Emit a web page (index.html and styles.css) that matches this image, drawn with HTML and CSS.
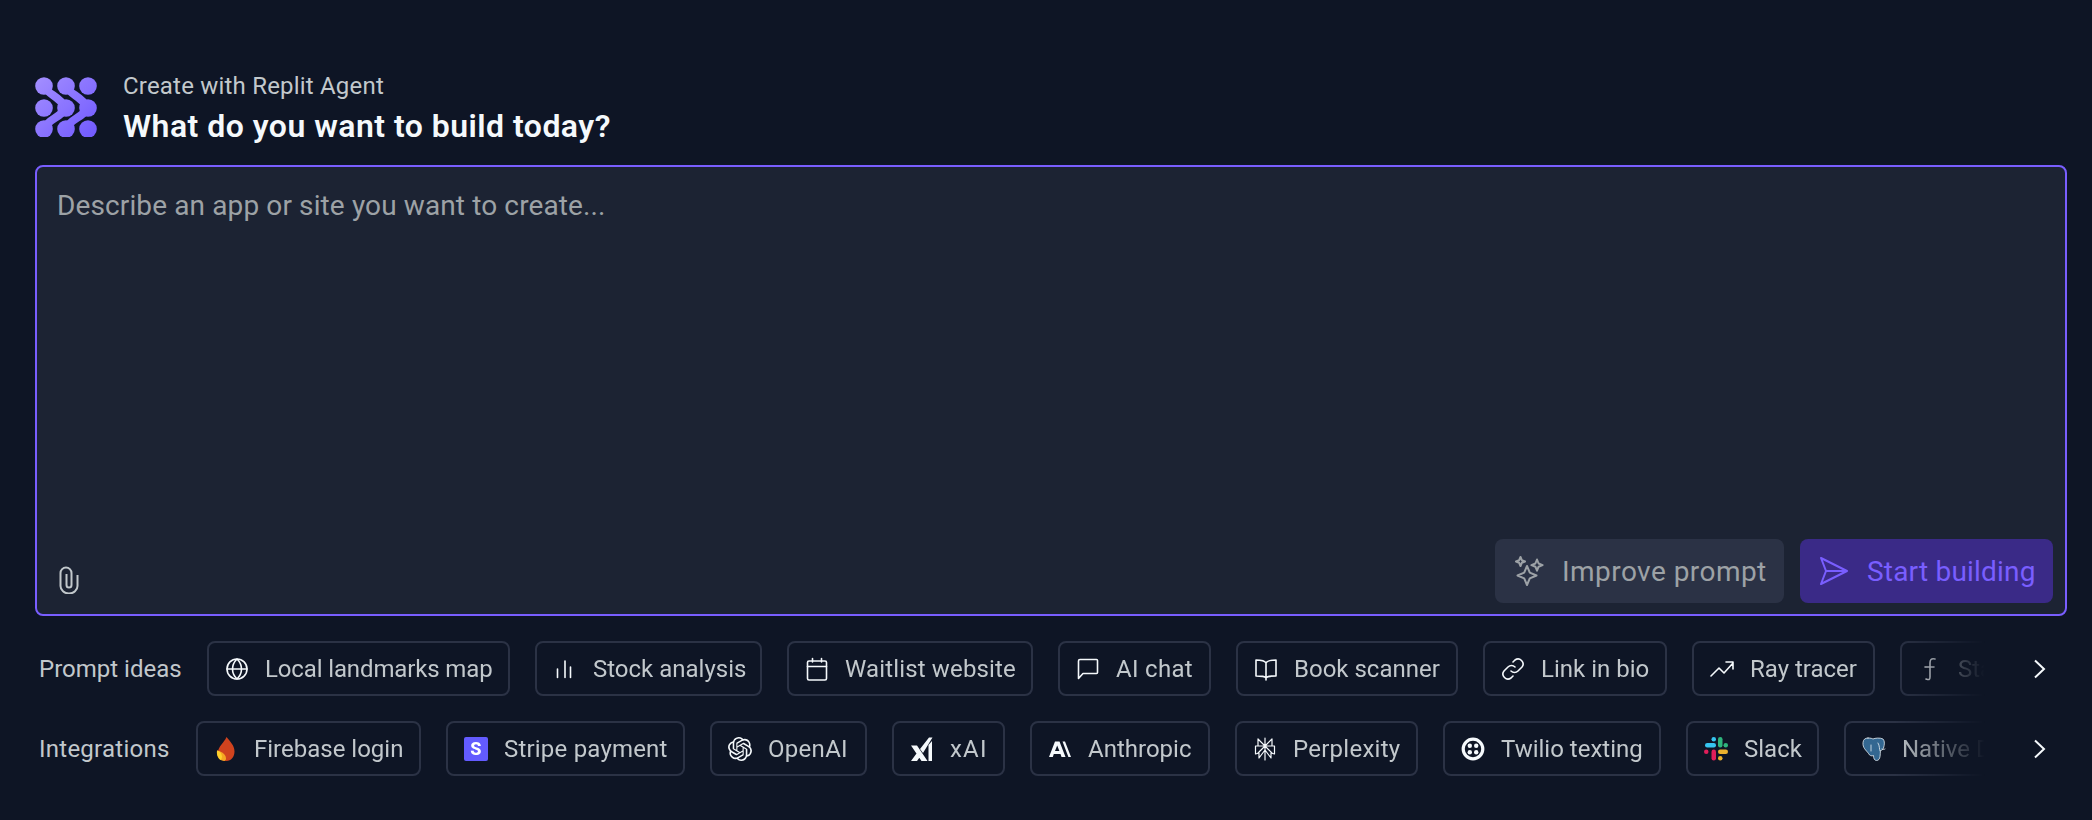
FILE: index.html
```html
<!DOCTYPE html>
<html lang="en">
<head>
<meta charset="utf-8">
<title>Create with Replit Agent</title>
<link rel="stylesheet" href="styles.css">
</head>
<body>
<main class="page">
  <header class="head">
    <svg class="logo" viewBox="0 0 62 60" aria-hidden="true">
      <defs><linearGradient id="lg" gradientUnits="userSpaceOnUse" x1="0" y1="0" x2="62" y2="60"><stop offset="0" stop-color="#a48fff"/><stop offset="1" stop-color="#7059ff"/></linearGradient></defs>
      <g fill="url(#lg)">
        <circle cx="9" cy="9" r="8.800"/><circle cx="31" cy="9" r="8.800"/><circle cx="53" cy="9" r="8.800"/>
        <circle cx="9" cy="31" r="8.800"/><circle cx="31" cy="31" r="8.800"/><circle cx="53" cy="31" r="8.800"/>
        <circle cx="9" cy="52" r="8.800"/><circle cx="31" cy="52" r="8.800"/><circle cx="53" cy="52" r="8.800"/>
      </g>
      <g fill="none" stroke="url(#lg)" stroke-width="8">
        <path d="M9 9C13 18 23 18 31 31"/><path d="M31 9C35 18 45 18 53 31"/>
        <path d="M31 31C24 42 14 41 9 52"/><path d="M53 31C46 42 36 41 31 52"/>
      </g>
    </svg>
    <div class="head-text">
      <p class="eyebrow">Create with Replit Agent</p>
      <h1 class="title">What do you want to build today?</h1>
    </div>
  </header>

  <section class="card">
    <p class="placeholder">Describe an app or site you want to create...</p>
    <div class="card-foot">
      <svg class="clip" viewBox="0 0 20 28" aria-hidden="true"><path d="M18.500 9V20a8.500 7.500 0 0 1-17 0V7a5.500 5.500 0 0 1 11 0V19a2.500 2.500 0 0 1-5 0V8"/></svg>
      <div class="actions">
        <button class="btn btn-improve" type="button">
          <svg class="btn-icon" viewBox="0 0 32 32" aria-hidden="true"><path d="M14 11l2.800 6.700 6.700 2.800-6.700 2.800L14 30l-2.800-6.700-6.700-2.800 6.700-2.800zM7.500 2l1.300 3.200L12 6.500 8.800 7.800 7.500 11 6.200 7.800 3 6.500l3.200-1.300zM24 4.500l1.600 4 4 1.600-4 1.600-1.600 4-1.600-4-4-1.600 4-1.600z"/></svg>
          <span>Improve prompt</span>
        </button>
        <button class="btn btn-start" type="button">
          <svg class="btn-icon" viewBox="0 0 32 32" aria-hidden="true"><path d="M3 3l26 13L3 29l5-13zM8 16h21"/></svg>
          <span>Start building</span>
        </button>
      </div>
    </div>
  </section>

  <section class="row">
    <span class="row-label">Prompt ideas</span>
    <div class="scroller">
      <a class="chip chip-local"><svg class="ico" viewBox="0 0 24 24"><circle cx="12" cy="12" r="10"/><path d="M2 12h20M12 2c-6 6-6 14 0 20M12 2c6 6 6 14 0 20"/></svg><span>Local landmarks map</span></a>
      <a class="chip chip-stock"><svg class="ico" viewBox="0 0 24 24"><path d="M4.500 12v8.500M12 4v16.500M17.500 10v10.500"/></svg><span>Stock analysis</span></a>
      <a class="chip chip-wait"><svg class="ico" viewBox="0 0 24 24"><rect x="2.500" y="4" width="19" height="19" rx="1.500"/><path d="M2.500 9.500h19M7.500 1.500V5M16.500 1.500V5"/></svg><span>Waitlist website</span></a>
      <a class="chip chip-chat"><svg class="ico" viewBox="0 0 24 24"><path d="M2.500 21.500V4A1.500 1.500 0 0 1 4 2.500h16.500a1 1 0 0 1 1 1v12a1 1 0 0 1-1 1H7z"/></svg><span>AI chat</span></a>
      <a class="chip chip-book"><svg class="ico" viewBox="0 0 24 24"><path d="M12 6c-1-2-4-3-10-3v16c6 0 9 0 10 2 1-2 4-2 10-2V3c-6 0-9 1-10 3zM12 6v17"/></svg><span>Book scanner</span></a>
      <a class="chip chip-link"><svg class="ico" viewBox="0 0 24 24"><path d="M10 14a5 5 0 0 0 7 0l4-4a5 5 0 0 0-7-7l-2 2M14 10a5 5 0 0 0-7 0l-4 4a5 5 0 0 0 7 7l2-2"/></svg><span>Link in bio</span></a>
      <a class="chip chip-ray"><svg class="ico" viewBox="0 0 24 24"><path d="M1 19l8-8 5 5 9-10M16 5h7v7"/></svg><span>Ray tracer</span></a>
      <a class="chip"><svg class="ico" viewBox="0 0 24 24"><path d="M17 2c-4-1-5 1-5 4v14c0 3-1 3-4 2M7 10h9"/></svg><span>Stable Diffusion</span></a>
    </div>
    <svg class="chev" viewBox="0 0 24 24" aria-hidden="true"><path d="M8 3.500l9 8.500-9 8.500"/></svg>
  </section>

  <section class="row">
    <span class="row-label row-label-int">Integrations</span>
    <div class="scroller">
      <a class="chip chip-fire"><svg class="ico ico-fill" viewBox="0 0 24 24"><path fill="#d0431e" d="M12.500 0c4 5 8 8.500 8 14.500C20.500 20 17 24 12.500 24 8.500 24 4 21 4 15.500 4 9.500 10 6 12.500 0z"/><path fill="#f5a623" d="M3 13.500c3 .5 9 3 9 8 0 1-.5 2-1.500 2.500C6 24 2 20 3 13.500z"/><path fill="#fdd02c" d="M3 13.500c3 .5 4.500 3 5 6-.2 2-.7 3-1.500 3.500C4 21 2.500 17 3 13.500z"/></svg><span>Firebase login</span></a>
      <a class="chip chip-stripe"><span class="stripe">S</span><span>Stripe payment</span></a>
      <a class="chip chip-openai"><svg class="ico ico-fill" viewBox="0 0 24 24"><path fill="#f5f9fc" d="M22.282 9.821a5.985 5.985 0 0 0-.516-4.911 6.046 6.046 0 0 0-6.510-2.900A6.065 6.065 0 0 0 4.981 4.182a5.985 5.985 0 0 0-3.998 2.900 6.046 6.046 0 0 0 .743 7.097 5.980 5.980 0 0 0 .511 4.911 6.051 6.051 0 0 0 6.515 2.900A5.985 5.985 0 0 0 13.260 24a6.056 6.056 0 0 0 5.772-4.206 5.990 5.990 0 0 0 3.998-2.900 6.056 6.056 0 0 0-.748-7.073zm-9.022 12.608a4.476 4.476 0 0 1-2.876-1.041l.142-.080 4.778-2.758a.795.795 0 0 0 .393-.681v-6.737l2.020 1.169a.071.071 0 0 1 .038.052v5.583a4.504 4.504 0 0 1-4.495 4.494zm-9.661-4.125a4.471 4.471 0 0 1-.535-3.014l.142.085 4.783 2.758a.771.771 0 0 0 .781 0l5.843-3.369v2.332a.080.080 0 0 1-.033.062L9.740 19.950a4.499 4.499 0 0 1-6.141-1.646zM2.341 7.896a4.485 4.485 0 0 1 2.366-1.973V11.600a.766.766 0 0 0 .388.677l5.814 3.354-2.020 1.169a.076.076 0 0 1-.071 0l-4.830-2.787A4.504 4.504 0 0 1 2.341 7.872zm16.596 3.856L13.104 8.364 15.119 7.200a.076.076 0 0 1 .071 0l4.830 2.791a4.494 4.494 0 0 1-.676 8.104v-5.677a.790.790 0 0 0-.407-.667zm2.011-3.023l-.142-.085-4.774-2.782a.776.776 0 0 0-.785 0L9.409 9.230V6.897a.066.066 0 0 1 .028-.061l4.830-2.787a4.499 4.499 0 0 1 6.680 4.660zM8.307 12.863l-2.020-1.164a.080.080 0 0 1-.038-.057V6.074a4.499 4.499 0 0 1 7.376-3.454l-.142.081L8.704 5.459a.795.795 0 0 0-.393.681zm1.097-2.365l2.602-1.500 2.607 1.500v2.999l-2.597 1.500-2.607-1.500z"/></svg><span>OpenAI</span></a>
      <a class="chip chip-xai"><svg class="ico ico-fill" viewBox="0 0 24 24"><path fill="#f5f9fc" d="M1 8.500h6L17.500 24h-6zM1 24l5.500-7.500 3 4L7 24zM10 12l3 4L22.500 0.500H19zM18.500 8l3.500-4V24h-3.500z"/></svg><span>xAI</span></a>
      <a class="chip chip-anth"><svg class="ico ico-fill" viewBox="0 0 24 24"><path fill="#f5f9fc" d="M7 4.500h4.500L17.500 20h-4l-1-3H5.800l-1 3H1zM9.200 8.500L7 14h4.400zM14.500 4.500h2.500L23 20h-2.600z"/></svg><span>Anthropic</span></a>
      <a class="chip chip-perp"><svg class="ico" viewBox="0 0 24 24"><path class="thin" d="M12 1v22M5 2l7 7 7-7v7M5 2v7M2.500 9h19v8l-3.500-1v5l-6-8-6 8v-5l-3.500 1zM12 9l-7 7M12 9l7 7"/></svg><span>Perplexity</span></a>
      <a class="chip chip-twilio"><svg class="ico ico-fill" viewBox="0 0 24 24"><circle cx="12" cy="12" r="9.800" fill="none" stroke="#f5f9fc" stroke-width="3.200"/><g fill="#f5f9fc"><circle cx="8.800" cy="8.800" r="2.200"/><circle cx="15.200" cy="8.800" r="2.200"/><circle cx="8.800" cy="15.200" r="2.200"/><circle cx="15.200" cy="15.200" r="2.200"/></g></svg><span>Twilio texting</span></a>
      <a class="chip chip-slack"><svg class="ico ico-fill" viewBox="0 0 24 24"><g fill="#36c5f0"><rect x="1" y="6" width="11" height="4.500" rx="2.250"/><rect x="7.500" y="0" width="4.500" height="4.500" rx="2.250"/></g><g fill="#2eb67d"><rect x="14" y="0" width="4.500" height="10.500" rx="2.250"/><rect x="19.500" y="6" width="4.500" height="4.500" rx="2.250"/></g><g fill="#ecb22e"><rect x="14" y="12.500" width="10" height="4.500" rx="2.250"/><rect x="14" y="19" width="4.500" height="4.500" rx="2.250"/></g><g fill="#e01e5a"><rect x="7.500" y="12.500" width="4.500" height="11" rx="2.250"/><rect x="0" y="12.500" width="4.500" height="4.500" rx="2.250"/></g></svg><span>Slack</span></a>
      <a class="chip"><svg class="ico ico-fill" viewBox="0 0 24 24"><path fill="#336791" stroke="#e6edf3" stroke-width=".8" d="M6 1c3 0 4 .5 5 1 2-1 7-1.500 10 0 2 2 1.500 6 .5 9-.5 1.500-2 2.500-3 2.500-.5 3 .5 10-4 10-2 0-3-2-3-5-2 1-4 0-5-2C4 13 .5 11 1 5.500 1.300 2.500 3 1 6 1z"/><path fill="none" stroke="#e6edf3" stroke-width=".8" d="M9 8v6M16 6c2 3 1 6 2 8M20 12c1 1 2 .5 3 0"/></svg><span>Native Database</span></a>
    </div>
    <svg class="chev" viewBox="0 0 24 24" aria-hidden="true"><path d="M8 3.500l9 8.500-9 8.500"/></svg>
  </section>
</main>
</body>
</html>
```

FILE: styles.css
```css
* { box-sizing: border-box; }
html, body { margin: 0; height: 100%; }
body {
  background: #0e1525;
  color: #f5f9fc;
  font-family: "Roboto", "Liberation Sans", sans-serif;
  overflow: hidden;
}
.page {
  display: flex;
  flex-direction: column;
  gap: 25px;
  padding: 77px 25px 0 35px;
}
.head {
  display: flex;
  align-items: center;
  gap: 26px;
  height: 60px;
  margin-bottom: 3px;
}
.logo { width: 62px; height: 60px; flex: none; }
.head-text { display: flex; flex-direction: column; gap: 5px; padding-top: 1px; }
.eyebrow { margin: 0; font-size: 24px; line-height: 32px; color: #c2c8cc; letter-spacing: .2px; }
.title { margin: 0; font-size: 32px; line-height: 38px; font-weight: 600; color: #f5f9fc; letter-spacing: .47px; }

.card {
  height: 451px;
  display: flex;
  flex-direction: column;
  background: #1c2333;
  border: 2px solid #795eff;
  border-radius: 8px;
  padding: 21px 12px 11px 20px;
}
.placeholder { margin: 0; font-size: 28px; line-height: 36px; color: #9da2a6; letter-spacing: .12px; }
.card-foot {
  margin-top: auto;
  display: flex;
  justify-content: space-between;
  align-items: flex-end;
}
.clip { width: 20px; height: 28px; margin: 0 0 9px 2px; fill: none; stroke: #c2c8cc; stroke-width: 2; }
.actions { display: flex; gap: 16px; }
.btn {
  height: 64px;
  display: flex;
  align-items: center;
  gap: 17px;
  padding: 0 18px;
  border: 0;
  border-radius: 8px;
  font: inherit;
  font-size: 28px;
  white-space: nowrap;
}
.btn-icon { width: 32px; height: 32px; flex: none; fill: none; stroke: currentColor; stroke-width: 2; stroke-linejoin: round; }
.btn-improve { background: #2b3245; color: #9da2a6; letter-spacing: .45px; width: 289px; }
.btn-start { background: #3a2a87; color: #795eff; letter-spacing: .2px; width: 253px; }

.row { display: flex; align-items: center; height: 55px; padding-left: 4px; }
.row-label { flex: none; width: 143px; font-size: 24px; color: #c2c8cc; margin-right: 25px; }
.row-label-int { width: 132px; letter-spacing: .25px; }
.scroller {
  flex: 1;
  min-width: 0;
  display: flex;
  gap: 25px;
  overflow: hidden;
  -webkit-mask-image: linear-gradient(to right, #000 calc(100% - 90px), transparent 100%);
  mask-image: linear-gradient(to right, #000 calc(100% - 90px), transparent 100%);
}
.chip {
  flex: none;
  height: 55px;
  display: flex;
  align-items: center;
  gap: 16px;
  padding: 0 16px;
  border: 2px solid #2b3245;
  border-radius: 8px;
  font-size: 24px;
  color: #c2c8cc;
  white-space: nowrap;
}
.chip-local { width: 303px; letter-spacing: -.13px; }
.chip-stock { width: 227px; }
.chip-wait { width: 246px; letter-spacing: .15px; }
.chip-chat { width: 153px; letter-spacing: .3px; }
.chip-book { width: 222px; }
.chip-link { width: 184px; }
.chip-ray { width: 183px; }
.chip-fire { width: 225px; }
.chip-stripe { width: 239px; letter-spacing: .2px; }
.chip-openai { width: 157px; letter-spacing: .3px; }
.chip-xai { width: 113px; letter-spacing: 1.2px; }
.chip-anth { width: 180px; }
.chip-perp { width: 183px; letter-spacing: .25px; }
.chip-twilio { width: 218px; }
.chip-slack { width: 133px; }

.ico { width: 24px; height: 24px; flex: none; fill: none; stroke: #f5f9fc; stroke-width: 1.6; stroke-linecap: round; stroke-linejoin: round; }
.ico-fill { stroke: none; }
.thin { stroke-width: 1.2; }
.stripe {
  width: 24px;
  height: 24px;
  flex: none;
  display: flex;
  align-items: center;
  justify-content: center;
  background: #635bff;
  border-radius: 2px;
  color: #fff;
  font-size: 18px;
  font-weight: 800;
}
.chev { width: 24px; height: 24px; flex: none; margin: 0 16px 0 42px; fill: none; stroke: #f5f9fc; stroke-width: 2; }
```
